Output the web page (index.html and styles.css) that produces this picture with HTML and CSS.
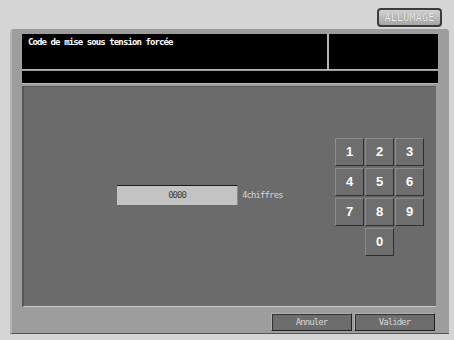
FILE: index.html
```html
<!DOCTYPE html>
<html lang="fr">
<head>
<meta charset="UTF-8">
<title>Code de mise sous tension</title>
<link rel="stylesheet" href="styles.css">
</head>
<body>

<div class="topbar">
    <div class="mode-btn">ALLUMAGE</div>
</div>

<div class="frame">
    <div class="header">
        <div class="title">Code de mise sous tension forcée</div>
        <div class="side"></div>
    </div>
    <div class="message"></div>

    <div class="content">
        <div class="entry">
            <div class="field">0000</div>
            <span class="hint">4chiffres</span>
        </div>
        <div class="keypad">
            <div class="key">1</div>
            <div class="key">2</div>
            <div class="key">3</div>
            <div class="key">4</div>
            <div class="key">5</div>
            <div class="key">6</div>
            <div class="key">7</div>
            <div class="key">8</div>
            <div class="key">9</div>
            <div class="key zero">0</div>
        </div>
    </div>

    <div class="actions">
        <div class="btn">Annuler</div>
        <div class="btn">Valider</div>
    </div>
</div>

</body>
</html>
```

FILE: styles.css
```css
body {
    margin: 0;
    background: #d5d5d5;
    font-family: "DejaVu Sans Mono", monospace;
    width: 454px;
    height: 340px;
    overflow: hidden;
}
.topbar {
    height: 29px;
    display: flex;
    justify-content: flex-end;
    align-items: flex-start;
    padding-right: 12px;
    box-sizing: border-box;
    padding-top: 8px;
}
.mode-btn {
    width: 65px;
    height: 19px;
    box-sizing: border-box;
    border: 2px solid #3c3c3c;
    border-radius: 4px;
    background: linear-gradient(#d2d2d2, #a6a6a6);
    color: #ececec;
    text-shadow: 0 0 1px #777;
    font-size: 10px;
    letter-spacing: 0.2px;
    line-height: 15px;
    text-align: center;
}
.frame {
    margin-left: 10px;
    width: 439px;
    height: 305px;
    box-sizing: border-box;
    background: #9d9d9d;
    border-left: 2px solid #b4b4b4;
    border-bottom: 1px solid #555;
    border-radius: 3px 3px 0 0;
    padding: 5px 11px 0 10px;
}
.header {
    display: flex;
    height: 36px;
    background: #000;
    border-bottom: 1px solid #b5b5b5;
    box-sizing: border-box;
}
.title {
    flex: 1;
    color: #fff;
    font-size: 9px;
    letter-spacing: -0.9px;
    font-weight: bold;
    padding: 3px 0 0 6px;
}
.side {
    width: 109px;
    border-left: 2px solid #b5b5b5;
}
.message {
    height: 12px;
    margin-top: 1px;
    background: #000;
    border-bottom: 1px solid #b5b5b5;
}
.content {
    margin-top: 2px;
    width: 414px;
    height: 221px;
    box-sizing: border-box;
    background: #6b6b6b;
    border-left: 2px solid #555;
    border-top: 1px solid #5a5a5a;
    border-bottom: 1px solid #c8c8c8;
    display: flex;
    align-items: center;
}
.entry {
    display: flex;
    align-items: center;
    margin-left: 93px;
    margin-top: -3px;
}
.field {
    width: 121px;
    height: 20px;
    box-sizing: border-box;
    background: #c3c3c3;
    border-top: 1px solid #1a1a1a;
    border-right: 1px solid #8a8a8a;
    color: #444;
    font-size: 9px;
    letter-spacing: -1px;
    line-height: 18px;
    text-align: center;
}
.hint {
    margin-left: 4px;
    color: #d4d4d4;
    font-size: 9px;
    letter-spacing: -0.9px;
}
.keypad {
    margin-left: auto;
    margin-right: 12px;
    margin-top: 0;
    display: grid;
    grid-template-columns: repeat(3, 29px);
    grid-auto-rows: 28px;
    column-gap: 1px;
    row-gap: 2px;
}
.key {
    box-sizing: border-box;
    background: #6e6e6e;
    border: 1px solid #8c8c8c;
    border-right-color: #2e2e2e;
    border-bottom-color: #2e2e2e;
    color: #fff;
    font-family: "Liberation Sans", Arial, sans-serif;
    font-weight: bold;
    font-size: 13px;
    display: flex;
    align-items: center;
    justify-content: center;
}
.zero {
    grid-column: 2;
}
.actions {
    display: flex;
    justify-content: flex-end;
    gap: 2px;
    margin-top: 6px;
    margin-right: 3px;
}
.btn {
    width: 81px;
    height: 18px;
    box-sizing: border-box;
    background: #6d6d6d;
    border: 1px solid #222;
    border-top-color: #b0b0b0;
    border-left-color: #b0b0b0;
    box-shadow: inset 1px 1px 0 #333;
    color: #d8d8d8;
    font-size: 9px;
    letter-spacing: -0.9px;
    line-height: 16px;
    text-align: center;
}
```
